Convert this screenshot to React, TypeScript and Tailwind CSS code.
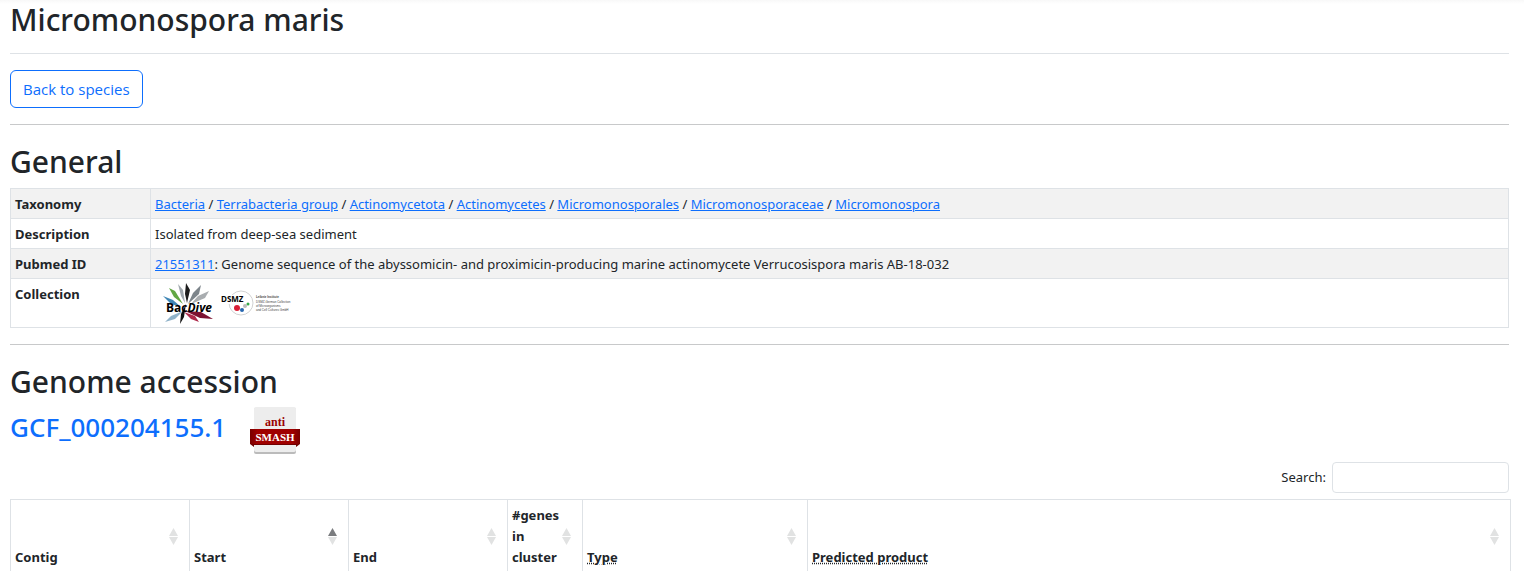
import clsx from "clsx";

interface Column {
  label: string;
  width: string;
  abbr?: boolean;
  sorted?: boolean;
}

const lineage = [
  "Bacteria",
  "Terrabacteria group",
  "Actinomycetota",
  "Actinomycetes",
  "Micromonosporales",
  "Micromonosporaceae",
  "Micromonospora",
];

const columns: Column[] = [
  { label: "Contig", width: "w-[179px]" },
  { label: "Start", width: "w-[159px]", sorted: true },
  { label: "End", width: "w-[159px]" },
  { label: "#genes in cluster", width: "w-[75px]" },
  { label: "Type", width: "w-[225px]", abbr: true },
  { label: "Predicted product", width: "w-auto", abbr: true },
];

function BacDiveLogo() {
  return (
    <svg width="52" height="42" viewBox="0 0 52 42" role="img" aria-label="BacDive">
      <path d="M0 13l10 4 8 7-10-3z" fill="#3f86b5" />
      <path d="M6 5l6 3 8 13-9-7z" fill="#62a744" />
      <path d="M15 1l5 6 2 13-4-7z" fill="#a0a8ae" />
      <path d="M23 0l4 7-3 13-2-9z" fill="#1c1c1c" />
      <path d="M38 2l-2 9-11 10 5-11z" fill="#7d858b" />
      <path d="M46 8l-4 7-14 6 7-8z" fill="#a9adb0" />
      <path d="M20 28l-8 8-10 3 6-6z" fill="#8fb2c9" />
      <path d="M23 21l-2 13-4 7 1-10z" fill="#111" />
      <path d="M22 28l16 1 12 7-13-1z" fill="#7c1231" />
      <path d="M21 29l11 4 4 6-8-3z" fill="#ad294b" />
      <text x="3" y="29" className="font-['Open_Sans',sans-serif] text-[12px] font-bold">
        Bac<tspan fontStyle="italic">Dive</tspan>
      </text>
    </svg>
  );
}

function DsmzLogo() {
  return (
    <svg width="80" height="30" viewBox="0 0 80 30" role="img" aria-label="DSMZ">
      <circle cx="20" cy="14" r="12" fill="none" stroke="#d2d2d2" />
      <path d="M0 6h23v9H0z" fill="#fff" />
      <circle cx="16" cy="19" r="3" fill="#d91e35" />
      <circle cx="21" cy="21" r="2" fill="#2767b0" />
      <circle cx="24" cy="17" r="2" fill="#bbb" />
      <circle cx="27" cy="15" r="1.5" fill="#35aa4a" />
      <text x="0" y="13" className="font-['Open_Sans',sans-serif] text-[8px] font-bold">DSMZ</text>
      <g fill="#444" className="font-['Liberation_Sans',sans-serif] text-[3px]">
        <text x="35" y="9" fontWeight="700">Leibniz Institute</text>
        <text x="35" y="14">DSMZ-German Collection</text>
        <text x="35" y="18">of Microorganisms</text>
        <text x="35" y="22">and Cell Cultures GmbH</text>
      </g>
    </svg>
  );
}

function AntiSmashLogo() {
  return (
    <svg width="50" height="48" viewBox="0 0 50 48" role="img" aria-label="antiSMASH">
      <defs>
        <linearGradient id="ribbon">
          <stop offset="0" stopColor="#780000" />
          <stop offset="0.15" stopColor="#a00000" />
          <stop offset="0.85" stopColor="#a00000" />
          <stop offset="1" stopColor="#780000" />
        </linearGradient>
      </defs>
      <rect x="4" y="1" width="42" height="46" rx="2" fill="#bbb" />
      <rect x="4" y="0" width="42" height="45" rx="2" fill="#ededed" />
      <path d="M0 37h50l-4 3v-2H4v2z" fill="#700000" />
      <path d="M0 22h50v15H0z" fill="url(#ribbon)" />
      <g textAnchor="middle" className="font-['Liberation_Serif',serif] font-bold">
        <text x="25" y="19" fill="#990000" className="text-[12px]">anti</text>
        <text x="25" y="34" fill="#fff" className="text-[11px]">SMASH</text>
      </g>
    </svg>
  );
}

function SortIcon({ sorted }: { sorted?: boolean }) {
  return (
    <svg width="9" height="17" viewBox="0 0 9 17" className="shrink-0" aria-hidden="true">
      <path d="M4.5 0L9 8H0z" fill={sorted ? "#7a7c7f" : "#e1e2e2"} />
      <path d="M4.5 17L9 9H0z" fill="#e1e2e2" />
    </svg>
  );
}

function Heading({ children }: { children: string }) {
  return <h2 className="mb-[7px] pt-px text-[30px] leading-[39px] font-medium">{children}</h2>;
}

function InfoTable() {
  const label = "w-[140px] border border-[#dee2e6] px-1 pt-[5px] pb-[3px] text-left align-top font-bold";
  const value = "border border-[#dee2e6] px-1 pt-[5px] pb-[3px]";

  return (
    <table className="w-full border-collapse leading-[21px]">
      <tbody>
        <tr className="bg-[#f2f2f2]">
          <th scope="row" className={label}>Taxonomy</th>
          <td className={value}>
            {lineage.map((name, index) => (
              <span key={name}>
                {index > 0 && " / "}
                <a href="#" className="text-[#0d6efd] underline">{name}</a>
              </span>
            ))}
          </td>
        </tr>
        <tr>
          <th scope="row" className={label}>Description</th>
          <td className={value}>Isolated from deep-sea sediment</td>
        </tr>
        <tr className="bg-[#f2f2f2]">
          <th scope="row" className={label}>Pubmed ID</th>
          <td className={value}>
            <a href="#" className="text-[#0d6efd] underline">21551311</a>
            : Genome sequence of the abyssomicin- and proximicin-producing marine actinomycete Verrucosispora maris AB-18-032
          </td>
        </tr>
        <tr>
          <th scope="row" className={label}>Collection</th>
          <td className={value}>
            <div className="flex h-10 items-center gap-1.5 px-2">
              <a href="#"><BacDiveLogo /></a>
              <a href="#"><DsmzLogo /></a>
            </div>
          </td>
        </tr>
      </tbody>
    </table>
  );
}

function ClusterTable() {
  return (
    <div className="-mr-0.5">
      <table className="w-full table-fixed border-collapse leading-[21px]">
        <thead>
          <tr>
            {columns.map((column) => (
              <th
                key={column.label}
                scope="col"
                aria-sort={column.sorted ? "ascending" : undefined}
                className={clsx(
                  "border border-b-0 border-[#dee2e6] pt-[5px] pr-[11px] pb-[3px] pl-1 text-left align-bottom font-bold",
                  column.width,
                )}
              >
                <div className="flex h-[63px] items-center justify-between">
                  <span className="self-end">
                    {column.abbr ? (
                      <abbr title={column.label} className="underline decoration-dotted">{column.label}</abbr>
                    ) : (
                      column.label
                    )}
                  </span>
                  <SortIcon sorted={column.sorted} />
                </div>
              </th>
            ))}
          </tr>
        </thead>
      </table>
    </div>
  );
}

export default function App() {
  return (
    <div className="bg-white font-['Noto_Sans','Open_Sans',sans-serif] text-[13px] text-[#212529]">
      <div className="h-1 bg-linear-to-b from-[#f8f8f8] to-white" />
      <main className="-mt-1 pr-[15px] pl-[10px]">
        <h1 className="border-b border-[#dee2e6] pt-px pb-[14px] text-[30px] leading-[38px] font-medium">
          Micromonospora maris
        </h1>
        <button
          type="button"
          className="my-4 block h-[38px] rounded-md border border-[#0d6efd] px-3 font-['Open_Sans',sans-serif] text-[15px] text-[#0d6efd]"
        >
          Back to species
        </button>
        <hr className="mb-4 border-[#c8c9ca]" />

        <Heading>General</Heading>
        <InfoTable />
        <hr className="my-4 border-[#c8c9ca]" />

        <Heading>Genome accession</Heading>
        <div className="-mt-px flex h-[55px] items-start gap-6">
          <h3 className="pt-[3px] text-[26px] leading-[34px] font-medium">
            <a href="#" className="text-[#0d6efd]">GCF_000204155.1</a>
          </h3>
          <a href="#"><AntiSmashLogo /></a>
        </div>

        <div className="mb-1.5 flex items-center justify-end gap-1.5">
          <label htmlFor="search">Search:</label>
          <input
            id="search"
            type="search"
            className="h-[31px] w-[177px] rounded border border-[#dee2e6] px-2"
          />
        </div>
        <ClusterTable />
      </main>
    </div>
  );
}
